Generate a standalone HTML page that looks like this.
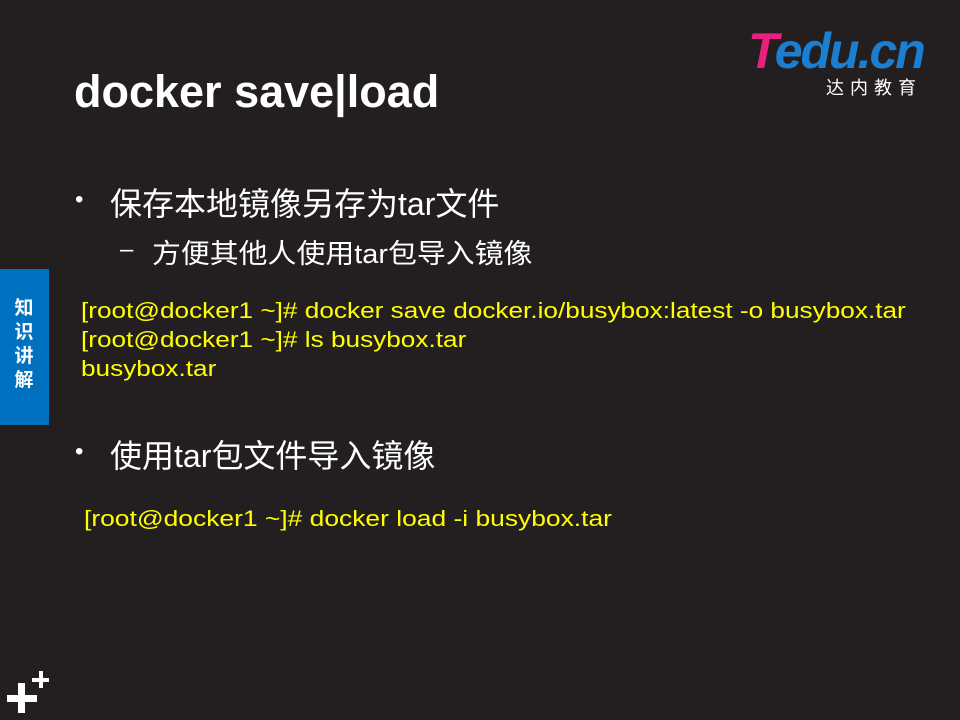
<!DOCTYPE html>
<html><head><meta charset="utf-8"><style>
body{margin:0;width:960px;height:720px;background:#231f20;position:relative;overflow:hidden;font-family:"Liberation Sans","Noto Sans CJK SC",sans-serif;color:#fff}
.a{position:absolute;white-space:nowrap}
.y{color:#ffff00;font-size:22px;line-height:29px;transform-origin:0 0;transform:scaleX(1.19)}
</style></head><body>
<div class="a" style="left:74px;top:66px;font-size:45px;font-weight:bold">docker save|load</div>
<div class="a" style="left:75px;top:186px;font-size:24px">•</div>
<div class="a" style="left:110px;top:179px;font-size:32px">保存本地镜像另存为tar文件</div>
<div class="a" style="left:120px;top:236px;font-size:24px">–</div>
<div class="a" style="left:152px;top:232px;font-size:27px;transform-origin:0 0;transform:scaleX(1.07)">方便其他人使用tar包导入镜像</div>
<div class="a y" style="left:81px;top:296px">[root@docker1 ~]# docker save docker.io/busybox:latest -o busybox.tar<br>[root@docker1 ~]# ls busybox.tar<br>busybox.tar</div>
<div class="a" style="left:75px;top:438px;font-size:24px">•</div>
<div class="a" style="left:110px;top:431px;font-size:32px">使用tar包文件导入镜像</div>
<div class="a y" style="left:84px;top:504px;transform:scaleX(1.2)">[root@docker1 ~]# docker load -i busybox.tar</div>
<div class="a" style="left:0;top:269px;width:49px;height:156px;background:#0070c0"></div>
<div class="a" style="left:13px;top:297px;width:22px;font-size:19px;line-height:24px;font-weight:bold;text-align:center;white-space:normal">知识讲解</div>
<div class="a" style="left:748px;top:24px;font-size:50px;font-weight:bold;font-style:italic;letter-spacing:-2px;line-height:54px"><span style="color:#e8217f">T</span><span style="color:#1b7ed0">edu.cn</span></div>
<div class="a" style="left:826px;top:74px;font-size:18px;letter-spacing:6px">达内教育</div>
<div class="a" style="left:7px;top:695px;width:30px;height:7px;background:#fff"></div>
<div class="a" style="left:18px;top:683px;width:7px;height:30px;background:#fff"></div>
<div class="a" style="left:32px;top:678px;width:17px;height:4px;background:#fff"></div>
<div class="a" style="left:39px;top:671px;width:4px;height:17px;background:#fff"></div>
</body></html>
